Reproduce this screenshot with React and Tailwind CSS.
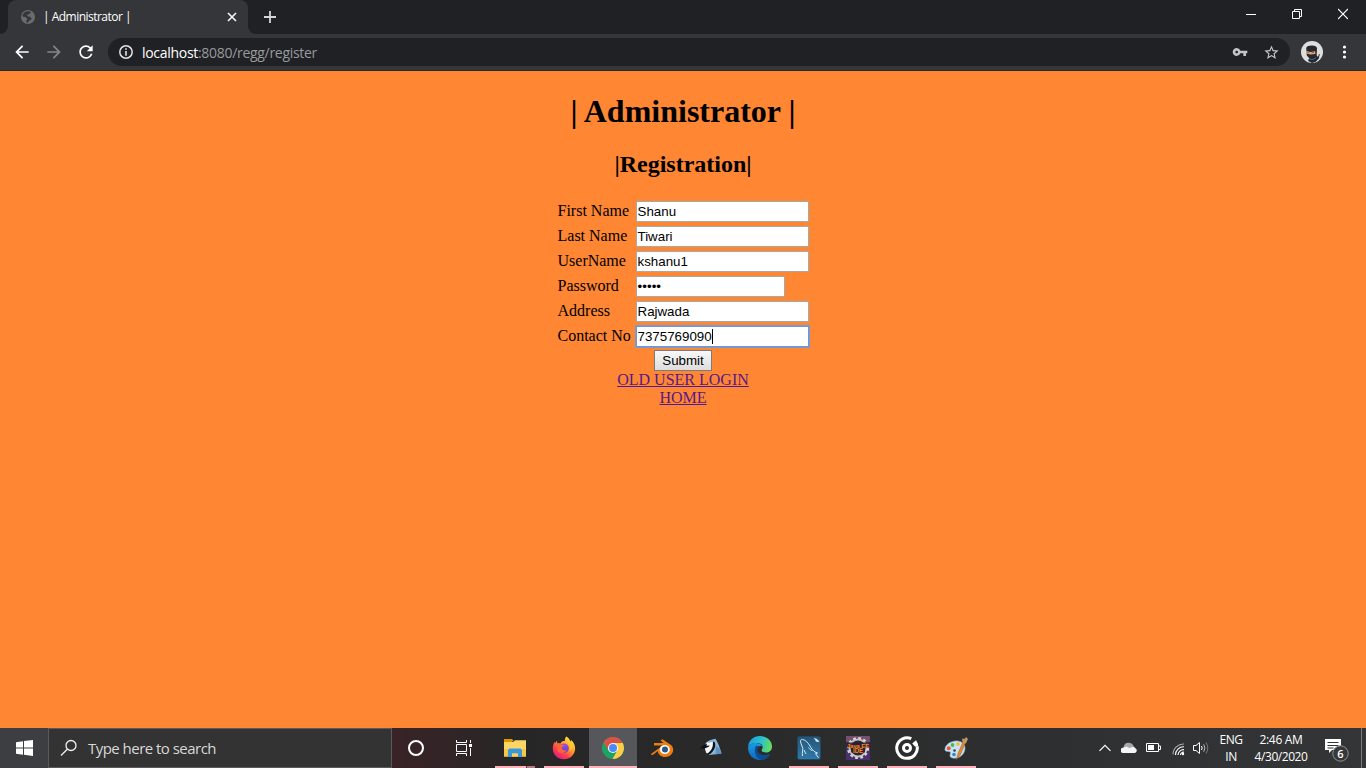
import React from "react";

const ui = "font-['Open_Sans','Noto_Sans',sans-serif]";

function Globe() {
  return (
    <svg width="14" height="14" viewBox="0 0 14 14" className="shrink-0">
      <circle cx="7" cy="7" r="7" fill="#696b6f" />
      <path d="M6.4 1.3C3.6 1.5 1.5 3.9 1.4 6.6l2.900.5 1.6 1.3.3 1.4-1.1 1 .5 1.6 1.4.2 1.2-2.2 1.9-.6.4-1.6-1.4-1.4-2.2-.4-1-1 .5-.8 1.7-.2.6-1.2 1.4-.7C9.3 1.700 8 1.200 6.400 1.300z" fill="#35363a" />
    </svg>
  );
}

function TabStrip() {
  return (
    <div className="flex h-[34px] bg-[#202124]">
      <div className="flex w-2 items-end">
        <svg width="8" height="8"><path d="M8 0v8H0a8 8 0 0 0 8-8z" fill="#35363a" /></svg>
      </div>
      <div className="flex w-[240px] items-center rounded-t-lg bg-[#35363a] pl-[13px] pr-[11px]">
        <Globe />
        <span className={`ml-[8px] whitespace-pre text-[12px] tracking-[-0.52px] text-white ${ui}`}>| Administrator |</span>
        <svg className="ml-auto" width="10" height="10" viewBox="0 0 10 10" stroke="#f1f3f4" strokeWidth="1.7"><path d="M1 1l8 8M9 1L1 9" /></svg>
      </div>
      <div className="flex w-2 items-end">
        <svg width="8" height="8"><path d="M0 0v8h8a8 8 0 0 1-8-8z" fill="#35363a" /></svg>
      </div>
      <svg className="ml-2 mt-[11px]" width="12" height="12" viewBox="0 0 12 12" stroke="#d5d6d8" strokeWidth="1.8"><path d="M6 0v12M0 6h12" /></svg>
      <div className="ml-auto flex pt-[8px]">
        <svg className="mr-[36px]" width="10" height="12" stroke="#fff"><path d="M0 6.500h10" /></svg>
        <svg className="mr-[36px]" width="10" height="12" stroke="#fff" fill="none"><path d="M.5 3.500h7v7h-7zM2.500 3.500v-2h7v7h-2" /></svg>
        <svg className="mr-[18px]" width="10" height="12" stroke="#fff" strokeWidth="1.1"><path d="M0 1l10 10M10 1L0 11" /></svg>
      </div>
    </div>
  );
}

function Avatar() {
  return (
    <svg width="22" height="22" viewBox="0 0 22 22">
      <circle cx="11" cy="11" r="11" fill="#dedede" />
      <path d="M5.200 7C6 5.300 8 4.500 11 4.600c3 .1 4.700 1 5 2.700l-.3 7.200 1.300 1.500 1-3 .8.300-1 4.200-3 3.200L11 22l-3.800-2 .3-1.800 1-.8-2.700-3z" fill="#25282c" />
      <path d="M5.300 10l4 .9 5-.6v2.600l-5 .6-3.800-.9z" fill="#e9a981" />
      <path d="M6.500 11.500l2 .4M10.500 11.800l2.500-.4" stroke="#744b36" strokeWidth=".8" />
      <path d="M8 17.500l3 1.300 4-2" stroke="#4c657b" fill="none" />
    </svg>
  );
}

function Toolbar() {
  return (
    <div className="flex h-[37px] items-center border-b border-[#2b2a2b] bg-[#35363a] pl-3">
      <svg width="20" height="20" viewBox="0 0 24 24" fill="#fff"><path d="M20 11H7.830l5.590-5.590L12 4l-8 8 8 8 1.410-1.410L7.830 13H20v-2z" /></svg>
      <svg className="ml-3" width="20" height="20" viewBox="0 0 24 24" fill="#85868a"><path d="M12 4l-1.410 1.410L16.170 11H4v2h12.170l-5.580 5.590L12 20l8-8z" /></svg>
      <svg className="ml-3" width="20" height="20" viewBox="0 0 24 24" fill="#fff"><path d="M17.650 6.350A7.958 7.958 0 0 0 12 4c-4.420 0-7.990 3.580-7.990 8s3.570 8 7.990 8c3.730 0 6.840-2.550 7.730-6h-2.080A5.990 5.990 0 0 1 12 18c-3.310 0-6-2.690-6-6s2.690-6 6-6c1.660 0 3.140.69 4.220 1.780L13 11h7V4l-2.350 2.350z" /></svg>
      <div className="ml-3 flex h-7 w-[1182px] items-center rounded-full bg-[#202124] pl-[11px] pr-[10px]">
        <svg width="14" height="14" viewBox="0 0 14 14"><circle cx="7" cy="7" r="6.200" fill="none" stroke="#e3e4e6" strokeWidth="1.500" /><path d="M7 3.200v1.500M7 6v4.800" stroke="#e3e4e6" strokeWidth="1.600" /></svg>
        <span className={`ml-[9px] text-[14px] tracking-[-0.3px] text-[#97999d] ${ui}`}><span className="text-white">localhost</span>:8080/regg/register</span>
        <svg className="ml-auto" width="16" height="16" viewBox="0 0 24 24" fill="#c3c4c6"><path d="M12.650 10A5.990 5.990 0 0 0 7 6c-3.310 0-6 2.690-6 6s2.690 6 6 6a5.990 5.990 0 0 0 5.650-4H17v4h4v-4h2v-4H12.650zM7 14c-1.100 0-2-.9-2-2s.9-2 2-2 2 .9 2 2-.9 2-2 2z" /></svg>
        <svg className="ml-[15px]" width="17" height="17" viewBox="0 0 24 24" fill="#c3c4c6"><path d="M22 9.240l-7.190-.62L12 2 9.190 8.630 2 9.240l5.460 4.730L5.820 21 12 17.270 18.180 21l-1.630-7.030L22 9.240zM12 15.400l-3.760 2.270 1-4.280-3.320-2.880 4.380-.38L12 6.100l1.710 4.040 4.380.38-3.320 2.880 1 4.280L12 15.400z" /></svg>
      </div>
      <div className="ml-[11px]"><Avatar /></div>
      <svg className="ml-[19px]" width="5" height="14" viewBox="0 0 5 14" fill="#fff"><circle cx="2.500" cy="2" r="1.600" /><circle cx="2.500" cy="7" r="1.600" /><circle cx="2.500" cy="12" r="1.600" /></svg>
    </div>
  );
}

const fields = [
  ["First Name", "Shanu"],
  ["Last Name", "Tiwari"],
  ["UserName", "kshanu1"],
  ["Password", "•••••"],
  ["Address", "Rajwada"],
  ["Contact No", "7375769090"],
];

function Field({ label, value }) {
  const focused = label === "Contact No";
  const secret = label === "Password";
  return (
    <div className="flex h-[25px] items-center">
      <label className="w-[78px] pb-[2px] text-[16px] leading-[18px]">{label}</label>
      <div
        className={`flex h-[21px] items-center bg-white pl-px font-['Liberation_Sans',sans-serif] text-[13.333px] ${
          secret ? "w-[149px] tracking-[0.05px]" : "w-[173px]"
        } ${focused ? "border border-[#7295d6] outline outline-1 outline-[#7b9ad4]" : "border border-[#a8a8a4]"}`}
      >
        <span>{value}</span>
        {focused && <span className="h-[15px] w-px bg-black" />}
      </div>
    </div>
  );
}

function Page() {
  return (
    <main className="flex h-[657px] flex-col items-center bg-[#ff8633] font-['Liberation_Serif',serif] text-black">
      <h1 className="mt-[22px] text-[32px] font-bold leading-[37px]">| Administrator |</h1>
      <h2 className="mt-[20px] text-[24px] font-bold leading-[28px]">|Registration|</h2>
      <form className="mt-[21px] w-[251px]">
        {fields.map(([label, value]) => <Field key={label} label={label} value={value} />)}
      </form>
      <button className="mt-px h-[21px] w-[58px] border border-[#7b7b7b] bg-linear-to-b from-[#f8f8f8] to-[#dddddd] font-['Liberation_Sans',sans-serif] text-[13.333px] leading-[19px]">Submit</button>
      <a className="text-[16px] leading-[18px] text-[#551a8b] underline">OLD USER LOGIN</a>
      <a className="text-[16px] leading-[18px] text-[#551a8b] underline">HOME</a>
    </main>
  );
}

function Explorer() {
  return (
    <svg width="24" height="24" viewBox="0 0 24 24">
      <path d="M1 3h8l1.500 1.500L9 6H1z" fill="#dc9600" />
      <path d="M1 6h9l2-1.700h11V20.500H1z" fill="#fbd667" />
      <path d="M1 13h22v7.500H1z" fill="#f6c64a" />
      <path d="M5 21v-7l1.500-1.500h11L19 14v7h-4v-3.500H9V21z" fill="#3c99d9" />
      <path d="M9 17.500h6v3H9z" fill="#f9d361" />
    </svg>
  );
}

function Firefox() {
  return (
    <svg width="24" height="24" viewBox="0 0 24 24">
      <defs>
        <linearGradient id="ffx" x1=".85" y1=".1" x2=".2" y2=".95"><stop stopColor="#ffe83e" /><stop offset=".4" stopColor="#ff9a25" /><stop offset=".7" stopColor="#ff3f50" /><stop offset="1" stopColor="#e01d82" /></linearGradient>
        <linearGradient id="ffy" x1="0" y1="0" x2="0" y2="1"><stop stopColor="#9b4ee7" /><stop offset="1" stopColor="#5744c6" /></linearGradient>
      </defs>
      <path d="M14.300.5c2.300 1.400 3.600 3 4 5 .6-.4.9-1 .8-1.500 3 2.500 4.200 5.500 4 9-.5 6.200-5.200 10.300-11.100 10.300C5.500 23.300.8 18.500.8 12.500c0-2.800.6-5 1.900-6.800l.2 1.500L5 4.800l.3 2.500c1-.3 2-.2 3.100.2C9.600 5 11.500 5 13 4.800c-.3-1.500.2-3 1.300-4.300z" fill="url(#ffx)" />
      <circle cx="12" cy="12.200" r="4.800" fill="url(#ffy)" />
      <path d="M4.500 8.500c2.300-1 4.500-.5 5.800.4l2.100.2c-.2 1.200-1.500 1.700-2.500 2.100-.6 2.900 2.500 3.800 4.900 2.600-1.600 3.500-6 4.800-9 1.500-1.400-1.600-1.900-4-1.300-6.800z" fill="#ff6139" />
      <path d="M14 5c3 1.300 5.200 5 3.300 9.500 2-.6 3-2.500 3-4.500-.2-2-1-4-3-5.500z" fill="#ffca34" />
    </svg>
  );
}

function ChromeIcon() {
  return (
    <svg width="24" height="24" viewBox="0 0 24 24">
      <circle cx="12" cy="12" r="11" fill="#1da462" />
      <path d="M12 7h9.800A11 11 0 0 0 2.470 6.500l5.200 8z" fill="#dd5144" />
      <path d="M16.330 14.500L11.500 23A11 11 0 0 0 21.800 7H12z" fill="#ffcd46" />
      <circle cx="12" cy="12" r="5.100" fill="#f4f7fb" /><circle cx="12" cy="12" r="4" fill="#4c8bf5" />
    </svg>
  );
}

function Blender() {
  return (
    <svg width="24" height="24" viewBox="0 0 24 24">
      <path d="M1 18L12.800 9.500H4V7h9.500L10.500 4.600l2-1.400L21 9c4 3.500 2.300 10-3 11.600-5.500 1.600-10-1.600-10.200-5.600L3.500 18.400C2.500 19.200.5 19 1 18z" fill="#ee7d10" />
      <ellipse cx="14.800" cy="13.500" rx="5" ry="4.500" fill="#fff" /><circle cx="15" cy="13.400" r="3" fill="#265787" />
    </svg>
  );
}

function Bird() {
  return (
    <svg width="24" height="24" viewBox="0 0 24 24">
      <path d="M7 7c2-2.500 5-3.500 9.500-4.300C18.500 6 21 11 22.500 17.500L10 19l3-8z" fill="#8db5d8" />
      <path d="M17 10l3.500 2.500 2 5-6 1z" fill="#5f93c1" />
      <path d="M6 8.500C7.500 5.500 11 4.800 14 6c1.500 2 1.300 5-.2 8L10 18.600 7.300 17 6 13z" fill="#f4f6f7" />
      <path d="M.8 12.300C3 10.500 5 8.500 8 7.500l-.5 2.200 3.300-.2-1.500 1.500-4.500 1.800z" fill="#0d1218" />
      <path d="M13.800 5.500l2 .7c1.400 4-.5 8-4 11.300l-2.500 1.300-1.500-1c4-2 6.900-6.500 6-12.300z" fill="#0d1218" />
      <path d="M9 6.500l4-1.200" stroke="#6998c2" strokeWidth=".8" />
    </svg>
  );
}

function Edge() {
  return (
    <svg width="26" height="26" viewBox="0 0 26 26">
      <defs>
        <linearGradient id="eg1" x1="0" y1=".4" x2="1" y2=".6"><stop stopColor="#1c9fdd" /><stop offset=".5" stopColor="#2bbfd0" /><stop offset="1" stopColor="#69df57" /></linearGradient>
        <linearGradient id="eg2" x1="0" y1="0" x2="0" y2="1"><stop stopColor="#1b9de0" /><stop offset="1" stopColor="#1165bd" /></linearGradient>
      </defs>
      <path d="M1 12C1.500 5.500 6.500 1 13 1c7 0 12 4.500 12 10.500 0 4-3 6-6 6-3.500 0-4.800-1.400-4.300-2.600.4-1 1.100-1.500 1-3.100C15.400 9 12.500 8 9.500 8 5 8 2 10 1 12z" fill="url(#eg1)" />
      <path d="M1 12.500C2.200 9 6 7.500 9.500 8c3 .3 5.500 1.700 6.200 4-1.200-1.300-3.500-1.300-4.700 0-3 3.500.5 9.500 6.500 9 2-.2 4-1 5.500-2-2.500 4-6 6-10 6C6 25 1 19.500 1 12.500z" fill="url(#eg2)" />
      <path d="M9.300 10.600C6.500 14 7.500 22 14 25c4 0 7-2 9-5.500.2-.5 0-.8-.5-.5-6 3-13.500-.5-12-5.500.3-1 .8-1.500 1.500-2z" fill="#0c4c91" />
    </svg>
  );
}

function Workbench() {
  return (
    <svg width="24" height="24" viewBox="0 0 24 24">
      <defs><linearGradient id="wb" x1="0" y1="0" x2="0" y2="1"><stop stopColor="#255477" /><stop offset="1" stopColor="#2e7aac" /></linearGradient></defs>
      <rect x=".5" y=".5" width="23" height="23" rx="2" fill="url(#wb)" stroke="#204764" />
      <path d="M5.500 20C4.500 16 7 13.500 5 10 3 6 3 3 5.500 3.500c3 .5 5.500 3 7.500 6.500 1.500 2.500 3 4.700 5 6l2.500 1-2 .7 3 4M15.500 14.500c-2-.5-3-1.500-4-3M7 14c1 1.500 1.200 3 2 4" fill="none" stroke="#dce8ef" strokeWidth="1" />
      <path d="M16.500 2l3 .8 3 2.700-1.500.5-1.300-.6-.7.7-.7-2.200z" fill="#e2e7ea" />
    </svg>
  );
}

function Eclipse() {
  return (
    <svg width="24" height="24" viewBox="0 0 24 24">
      <rect width="24" height="24" fill="#493070" /><path d="M0 0h24v6H0z" fill="#74506e" />
      <circle cx="12" cy="12" r="8.500" fill="#2b2440" stroke="#c3c1bd" strokeWidth="2" />
      <circle cx="12" cy="12" r="10" fill="none" stroke="#d9d7d2" strokeWidth="2.200" strokeDasharray="2.800 2.436" />
      <path d="M0 6.500h24v5H19v5H5v-5H0z" fill="#2b2030" opacity=".85" />
      <g fill="#ff8a16" fontFamily="Liberation Sans, sans-serif" fontWeight="700">
        <text x="1" y="11.500" fontSize="6" textLength="22" lengthAdjust="spacingAndGlyphs">Java EE</text>
        <text x="7" y="17.300" fontSize="6.500" textLength="10" lengthAdjust="spacingAndGlyphs">IDE</text>
      </g>
    </svg>
  );
}

function Groove() {
  return (
    <svg width="24" height="24" viewBox="0 0 24 24" fill="none" stroke="#fff">
      <path d="M16.300 2.700A10.300 10.300 0 1 0 22.200 10.500" strokeWidth="3" />
      <circle cx="12" cy="12" r="3.500" strokeWidth="3" />
      <path d="M17.200 7.500L21 4.200l1.800 3.300.5 3-3 .3z" fill="#fff" stroke="none" />
    </svg>
  );
}

function Paint() {
  return (
    <svg width="24" height="24" viewBox="0 0 24 24">
      <path d="M10 5.200C15 4 21 6.500 21 12c0 6-5 10.500-11 10.200-3.500-.1-4.500-1.700-3.800-3.700.6-2 .2-3.200-2-3C1.200 15.500.6 14.400 1 12.500 2 8.500 5.500 6 10 5.200z" fill="#c8e2f4" stroke="#83b5d9" strokeWidth=".6" />
      <circle cx="4.700" cy="12.200" r="2" fill="#e35a35" /><circle cx="8.500" cy="9" r="1.900" fill="#59b343" /><circle cx="14" cy="8" r="1.800" fill="#efb927" /><circle cx="10.500" cy="14.500" r="1.300" fill="#30404d" /><circle cx="10" cy="18.500" r="1.800" fill="#3d84ba" />
      <path d="M12.500 23.500l1.500-6L19 6l2.300 1-5 12z" fill="#e8882b" stroke="#9a5c24" strokeWidth=".5" />
      <path d="M18.700 7l-.7-4.500 2.500.5L22 1l2 2-2.200 4.500z" fill="#bf985c" />
    </svg>
  );
}

const apps = [
  ["explorer", Explorer, true],
  ["firefox", Firefox, true],
  ["chrome", ChromeIcon, true],
  ["blender", Blender, false],
  ["bird", Bird, false],
  ["edge", Edge, false],
  ["workbench", Workbench, true],
  ["eclipse", Eclipse, true],
  ["groove", Groove, true],
  ["paint", Paint, true],
];

function AppButton({ name, Icon, running }) {
  const active = name === "chrome";
  return (
    <div className={`flex h-10 w-12 flex-col items-center ${active ? "bg-[#55575a]" : ""}`}>
      <div className="flex h-[38px] items-center pt-[2px]"><Icon /></div>
      {running && (
        <div className={`flex h-[2px] bg-[#ffb2b9] ${active ? "w-12" : "w-10"}`}>
          {name === "explorer" && <div className="ml-auto h-[2px] w-[9px] border-l border-[#584044] bg-[#b17e83]" />}
        </div>
      )}
    </div>
  );
}

function Tray() {
  return (
    <div className={`ml-auto flex h-10 w-[267px] items-center text-[12px] text-white ${ui}`}>
      <svg width="12" height="8" viewBox="0 0 12 8" fill="none" stroke="#fff" strokeWidth="1.200"><path d="M.5 6.800L6 1.300l5.500 5.500" /></svg>
      <svg className="ml-[10px]" width="16" height="12" viewBox="0 0 16 12"><path d="M2.500 5.500C3 2 5 .8 7.500.8s4 1.200 5 3.200l1 3.500H3z" fill="#a4a6a8" /><path d="M2.500 11A2.600 2.600 0 0 1 2 5.800L5.500 4.500l3 1.500L12 4.800a3 3 0 0 1 2.600 1.800 2.400 2.400 0 0 1-.8 4.400z" fill="#f5f5f5" /></svg>
      <svg className="ml-[9px]" width="15" height="10" viewBox="0 0 15 10"><path d="M.5.500h12v8H.5zM13 3h1.500v3.500H13" fill="none" stroke="#fff" /><path d="M2 2h6v5H2z" fill="#fff" /></svg>
      <svg className="ml-[11px] mt-[3px]" width="13" height="13" viewBox="0 0 13 13" fill="none" strokeWidth="1.100"><path d="M1 11.500A10.500 10.500 0 0 1 12 1" stroke="#aaa" /><path d="M3.500 12A8 8 0 0 1 12 3.800M6 12a5.500 5.500 0 0 1 6-5.300M8.500 12a3.100 3.100 0 0 1 3.500-2.800" stroke="#fff" /><circle cx="11" cy="11" r="1.200" fill="#fff" /></svg>
      <svg className="ml-[8px]" width="17" height="14" viewBox="0 0 17 14" fill="none"><path d="M.5 4.500H3l3.500-3v11L3 9.500H.5z" stroke="#fff" /><path d="M8.500 5q1.300 2 0 4" stroke="#fff" /><path d="M10.700 3.300q2.400 3.700 0 7.400" stroke="#bbb" /><path d="M13 1.500q3.600 5.500 0 11" stroke="#777" /></svg>
      <div className="ml-[5px] flex w-[32px] flex-col items-center leading-[17px]"><span className="tracking-[-0.55px]">ENG</span><span className="tracking-[-0.4px]">IN</span></div>
      <div className="ml-[2px] flex w-[64px] flex-col items-center leading-[17px]"><span className="tracking-[-0.3px]">2:46 AM</span><span className="tracking-[-0.45px]">4/30/2020</span></div>
      <div className="ml-[12px] w-[25px]">
        <svg width="25" height="28" viewBox="0 0 25 28">
          <path d="M0 5h16v11H7l-3 3v-3H0z" fill="#fff" /><path d="M2.500 8.500h11M2.500 11.500h11M2.500 14h6" stroke="#333" />
          <circle cx="15.500" cy="19.500" r="7.700" fill="#37383a" stroke="#929292" />
          <text x="15.500" y="23.500" fill="#fff" fontSize="11" fontWeight="600" textAnchor="middle" fontFamily="Open Sans, sans-serif">6</text>
        </svg>
      </div>
      <div className="ml-auto h-10 w-[5px] border-l border-[#77797b]" />
    </div>
  );
}

function Taskbar() {
  return (
    <footer className="flex h-10 bg-linear-to-r from-[#392326] from-[29%] via-[#262626] via-[38%] to-[#343537]">
      <div className="flex w-12 items-center justify-center bg-[#3c3e41]">
        <svg width="17" height="16" viewBox="0 0 17 16" fill="#fff"><path d="M0 2.200L7 1.300v6.200H0zM8 1.100L17 0v7.500H8zM0 8.500h7v6.200L0 13.800zM8 8.500h9V16l-9-1.200z" /></svg>
      </div>
      <div className="flex w-[344px] items-center border border-[#5a5a5b] bg-[#333333] pl-[11px]">
        <svg width="18" height="18" viewBox="0 0 18 18" fill="none" stroke="#f0f0f0" strokeWidth="1.300"><circle cx="11" cy="6.500" r="5" /><path d="M7.300 10.200L1 16.500" /></svg>
        <span className={`ml-[10px] text-[15px] tracking-[-0.53px] text-[#d8d8d8] ${ui}`}>Type here to search</span>
      </div>
      <div className="flex w-12 items-center justify-center"><svg width="18" height="18" viewBox="0 0 18 18"><circle cx="9" cy="9" r="7" fill="none" stroke="#fff" strokeWidth="2" /></svg></div>
      <div className="flex w-12 items-center justify-center">
        <svg width="17" height="16" viewBox="0 0 17 16" fill="none" stroke="#fff"><path d="M.5 0v2.500h10V0M.5 16v-2.500h10V16M.5 4.500h10v7H.5zM14.500 0v3M14.500 8v8" /><path d="M13 4h3v3h-3z" fill="#fff" stroke="none" /></svg>
      </div>
      <div className="ml-[3px] flex gap-px">
        {apps.map(([name, Icon, running]) => <AppButton key={name} name={name} Icon={Icon} running={running} />)}
      </div>
      <Tray />
    </footer>
  );
}

export default function App() {
  return (
    <div className="flex h-[768px] w-[1366px] flex-col overflow-hidden">
      <TabStrip />
      <Toolbar />
      <Page />
      <Taskbar />
    </div>
  );
}
